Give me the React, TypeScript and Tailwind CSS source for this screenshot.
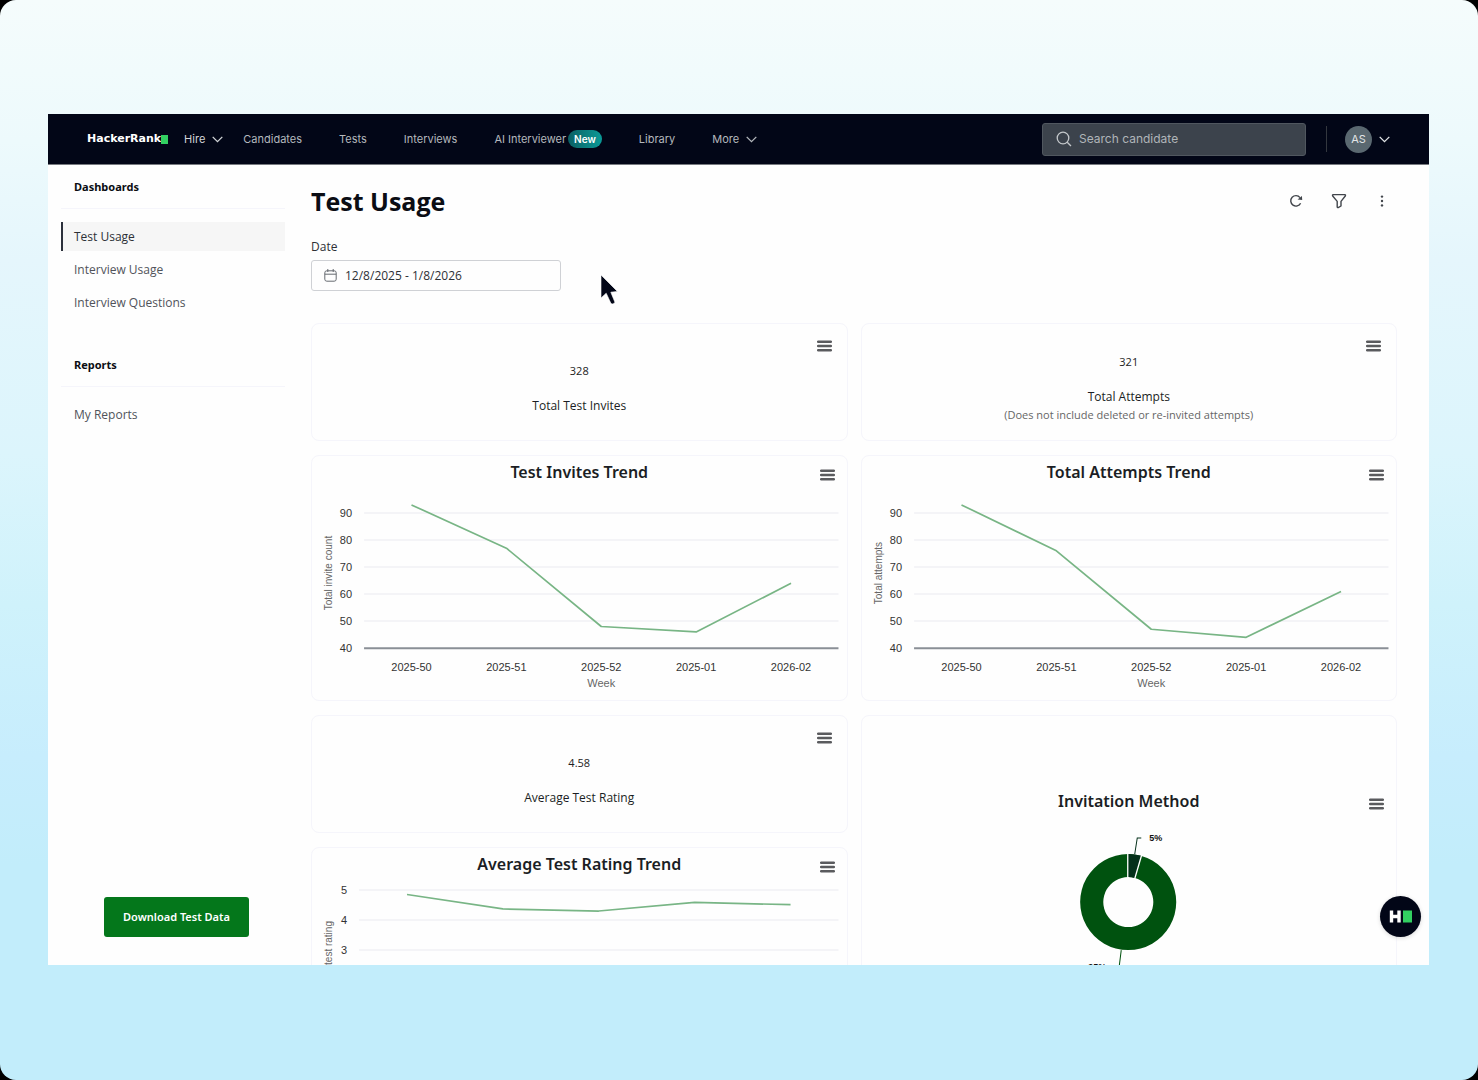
import React from 'react'

const navItems = ['Candidates', 'Tests', 'Interviews']

const dashboards = [
  { label: 'Test Usage', active: true },
  { label: 'Interview Usage', active: false },
  { label: 'Interview Questions', active: false },
]

const weeks = ['2025-50', '2025-51', '2025-52', '2025-01', '2026-02']

function Chevron() {
  return (
    <svg className="h-[7px] w-[11px]" viewBox="0 0 11 7" fill="none" stroke="currentColor" strokeWidth="1.3" aria-hidden="true">
      <path d="M0.7 0.9 L5.5 5.7 L10.3 0.9" />
    </svg>
  )
}

function MenuButton({ className, label }: { className: string; label: string }) {
  return (
    <button type="button" aria-label={`${label} menu`} className={`absolute text-[#5a5b5e] ${className}`}>
      <svg className="h-3 w-[15px]" viewBox="0 0 15 12" stroke="currentColor" strokeWidth="2.5" strokeLinecap="round" aria-hidden="true">
        <path d="M1.2 1.7H13.8M1.2 6H13.8M1.2 10.3H13.8" />
      </svg>
    </button>
  )
}

function StatCard({ value, label, note }: { value: string; label: string; note?: string }) {
  return (
    <section className="relative flex min-h-[118px] flex-col items-center justify-center rounded-lg border border-[#f5f5fb]">
      <MenuButton className="top-4 right-[15px]" label={label} />
      <p className="text-[11px] leading-[42px] text-[#222]">{value}</p>
      <p className="mt-[5px] text-xs leading-[18px] text-[#1b1e24]">{label}</p>
      {note && <p className="text-[11px] leading-[17px] text-[#666]">{note}</p>}
    </section>
  )
}

interface TrendProps {
  title: string
  axisTitle: string
  values: number[]
  ticks: number[]
  left: number
  top: number
  step: number
  axisAnchor: 'middle' | 'end'
  axisY: number
}

function TrendCard({ title, axisTitle, values, ticks, left, top, step, axisAnchor, axisY }: TrendProps) {
  const right = 526
  const slot = (right - left) / weeks.length
  const perUnit = step / (ticks[0] - ticks[1])
  const yOf = (v: number) => top + (ticks[0] - v) * perUnit
  const bottom = top + step * (ticks.length - 1)
  const points = values.map((v, i) => `${left + slot * (i + 0.5)},${yOf(v)}`).join(' ')

  return (
    <section className="relative shrink-0 rounded-lg border border-[#f5f5fb]">
      <h2 className="h-[33px] text-center font-['Noto_Sans',sans-serif] text-base leading-8 font-semibold text-[#1b1e24]">{title}</h2>
      <MenuButton className="top-[13px] right-3" label={title} />
      <svg className="block w-full font-['Liberation_Sans',sans-serif]" viewBox="0 0 534 211" role="img" aria-label={title}>
        {ticks.map((t) => (
          <g key={t}>
            <line
              x1={left}
              x2={right}
              y1={yOf(t)}
              y2={yOf(t)}
              stroke={yOf(t) === bottom ? '#8a8f96' : '#f1f1f5'}
              strokeWidth={yOf(t) === bottom ? 2 : 1.5}
            />
            <text x={left < 50 ? 35 : 40} y={yOf(t) + 4} fontSize="11" fill="#333" textAnchor="end">
              {t}
            </text>
          </g>
        ))}
        <text transform={`translate(20 ${axisY}) rotate(-90)`} fontSize="10" fill="#666" textAnchor={axisAnchor}>
          {axisTitle}
        </text>
        <polyline points={points} fill="none" stroke="#78b585" strokeWidth="1.7" strokeLinejoin="round" />
        {weeks.map((w, i) => (
          <text key={w} x={left + slot * (i + 0.5)} y={bottom + 23} fontSize="11" fill="#333" textAnchor="middle">
            {w}
          </text>
        ))}
        <text x={(left + right) / 2} y={bottom + 39} fontSize="11" fill="#666" textAnchor="middle">
          Week
        </text>
      </svg>
    </section>
  )
}

function InvitationCard() {
  return (
    <section className="relative rounded-lg border border-[#f5f5fb] pt-[69px]">
      <h2 className="text-center font-['Noto_Sans',sans-serif] text-base leading-8 font-semibold text-[#1b1e24]">Invitation Method</h2>
      <MenuButton className="top-[82px] right-3" label="Invitation Method" />
      <svg className="block w-full font-['Liberation_Sans',sans-serif]" viewBox="0 0 534 210" role="img" aria-label="Invitation Method">
        {/* ring: outer radius 48, inner radius 25 */}
        <path
          d="M266 37 A48 48 0 1 1 265.9 37 Z M266 60 A25 25 0 1 0 266.1 60 Z"
          fill="#00520f"
          fillRule="evenodd"
        />
        <path d="M266 37 A48 48 0 0 1 278.9 38.8 L272.7 60.9 A25 25 0 0 0 266 60 Z" fill="#04301a" />
        <path d="M265.5 36 V61 M279.4 38 L272.4 62" stroke="#fff" strokeWidth="1.3" />
        <path d="M272.5 37 L275 21 H279" fill="none" stroke="#04301a" strokeWidth="1" />
        <text x="287" y="24" fontSize="9" fontWeight="bold" fill="#111">5%</text>
        <path d="M259 133 L257 149 H251" fill="none" stroke="#00520f" strokeWidth="1" />
        <text x="226" y="153" fontSize="9" fontWeight="bold" fill="#111">95%</text>
      </svg>
    </section>
  )
}

function Header() {
  return (
    <header className="flex h-[51px] shrink-0 items-center border-b border-[#777a80] bg-[#020617] pr-[39px] pl-[39px] font-['Inter',sans-serif] text-[11px] text-[#b4b8bd]">
      <a href="#" className="flex items-center font-['DejaVu_Sans',sans-serif] font-bold text-white">
        HackerRank
        <span className="h-[9px] w-[7px] bg-[#32d061]" />
      </a>
      <button type="button" className="ml-4 flex items-center gap-[7px] text-[#d2d5d8]">
        Hire
        <Chevron />
      </button>
      <nav className="ml-5 flex items-center gap-[37px] whitespace-nowrap">
        {navItems.map((item) => (
          <a key={item} href="#">{item}</a>
        ))}
        <a href="#" className="flex items-center gap-0.5">
          AI Interviewer
          <span className="h-[18px] rounded-full bg-linear-to-r from-[#0a6064] to-[#0a9a97] px-1.5 text-[10px] leading-[18px] font-semibold text-white">
            New
          </span>
        </a>
        <a href="#">Library</a>
        <button type="button" className="flex items-center gap-[7px]">
          More
          <Chevron />
        </button>
      </nav>
      <label className="ml-auto flex h-[33px] w-[264px] items-center gap-[7px] rounded-[3px] border border-[#50575f] bg-[#3c434c] px-[13px] text-[#c4c8cb]">
        <svg className="h-4 w-4" viewBox="0 0 16 16" fill="none" stroke="currentColor" strokeWidth="1.3" aria-hidden="true">
          <circle cx="7" cy="7" r="5.8" />
          <path d="M11.2 11.2 L15 15" />
        </svg>
        <input
          type="search"
          aria-label="Search candidate"
          placeholder="Search candidate"
          className="min-w-0 flex-1 bg-transparent text-xs outline-none placeholder:text-[#b0b5b9]"
        />
      </label>
      <span className="ml-5 h-[26px] w-px bg-[#33373f]" />
      <button type="button" className="ml-[18px] flex items-center gap-[7px] text-[#e2e5e7]">
        <span className="flex size-[27px] items-center justify-center rounded-full bg-[#5a6870] text-[11px]">AS</span>
        <Chevron />
      </button>
    </header>
  )
}

function SideHeading({ children }: { children: React.ReactNode }) {
  return (
    <h2 className="mb-[13px] h-11 border-b border-[#f5f5fb] pl-[13px] font-['Noto_Sans',sans-serif] text-[11px] leading-[43px] font-bold text-[#0b0d12]">{children}</h2>
  )
}

function Sidebar() {
  return (
    <aside className="flex w-[263px] shrink-0 flex-col pr-[26px] pb-7 pl-[13px] text-xs">
      <SideHeading>Dashboards</SideHeading>
      <nav className="flex flex-col gap-1">
        {dashboards.map((d) => (
          <a
            key={d.label}
            href="#"
            className={`border-l-2 pl-[11px] leading-[29px] ${d.active ? 'border-[#2b303b] bg-[#f6f6f6] text-[#2d3036]' : 'border-transparent text-[#50535a]'}`}
          >
            {d.label}
          </a>
        ))}
      </nav>
      <div className="mt-[26px]">
        <SideHeading>Reports</SideHeading>
      </div>
      <a href="#" className="pl-[13px] leading-[29px] text-[#50535a]">My Reports</a>
      <button type="button" className="mt-auto ml-[43px] h-10 w-[145px] rounded-[3px] bg-[#04771b] font-['Noto_Sans',sans-serif] text-[11px] font-semibold text-white">
        Download Test Data
      </button>
    </aside>
  )
}

function Toolbar() {
  return (
    <div className="mr-[3px] flex gap-[19px] text-[#41454b]">
      <button type="button" aria-label="Refresh" className="flex size-6 items-center justify-center">
        <svg className="size-4" viewBox="0 0 16 16" fill="none" stroke="currentColor" strokeWidth="1.4">
          <path d="M12.6 10.2 A5.2 5.2 0 1 1 12 4.6" />
          <path d="M9.6 6.4 L14.2 7 L13.9 3 Z" fill="currentColor" stroke="none" />
        </svg>
      </button>
      <button type="button" aria-label="Filter" className="flex size-6 items-center justify-center">
        <svg className="size-4" viewBox="0 0 16 16" fill="none" stroke="currentColor" strokeWidth="1.4" strokeLinejoin="round">
          <path d="M2.2 1.6 H13.8 Q14.9 1.8 14.3 3 L10 8.4 V13 L7.2 14.6 Q6.2 14.8 6.2 13.8 V8.4 L1.7 3 Q1.1 1.8 2.2 1.6 Z" />
        </svg>
      </button>
      <button type="button" aria-label="More options" className="flex size-6 items-center justify-center">
        <svg className="size-4" viewBox="0 0 16 16" fill="currentColor">
          <circle cx="8" cy="3.6" r="1.2" />
          <circle cx="8" cy="8" r="1.2" />
          <circle cx="8" cy="12.4" r="1.2" />
        </svg>
      </button>
    </div>
  )
}

export default function App() {
  return (
    <div className="bg-black">
      <div className="flex h-screen flex-col rounded-2xl bg-[linear-gradient(180deg,#f5fcfc_0%,#edfafc_13%,#e5f6fc_24%,#dcf5fc_42%,#cff2fb_56%,#c7edfd_70%,#c2edfb_80%)] pt-[114px] pr-[49px] pb-[115px] pl-12 font-['Open_Sans','Noto_Sans',sans-serif]">
        <div className="relative flex min-h-0 flex-1 flex-col overflow-hidden bg-[#fefefe]">
          <Header />
          <div className="flex min-h-0 flex-1">
            <Sidebar />
            <main className="min-w-0 flex-1 overflow-y-auto pt-[18px] pr-8 [scrollbar-width:none]">
              <div className="flex items-center justify-between">
                <h1 className="text-[25px] leading-9 font-bold text-[#0b0d14]">Test Usage</h1>
                <Toolbar />
              </div>
              <label htmlFor="date" className="mt-5 block text-xs leading-4 text-[#2d3036]">Date</label>
              <div className="mt-[5px] flex h-[31px] w-[250px] items-center gap-2 rounded-[3px] border border-[#cfd1d5] px-3">
                <svg className="size-[13px] text-[#666a70]" viewBox="0 0 13 13" fill="none" stroke="currentColor" aria-hidden="true">
                  <rect x="0.8" y="1.8" width="11.4" height="10.4" rx="2" />
                  <path d="M0.8 5.2H12.2M3.8 0V3M9.2 0V3" />
                </svg>
                <input id="date" defaultValue="12/8/2025 - 1/8/2026" className="min-w-0 flex-1 text-xs text-[#2d3036] outline-none" />
              </div>
              <div className="mt-8 grid grid-cols-2 gap-[13px]">
                <div className="flex flex-col gap-[14px]">
                  <StatCard value="328" label="Total Test Invites" />
                  <TrendCard
                    title="Test Invites Trend"
                    axisTitle="Total invite count"
                    values={[93, 77, 48, 46, 64]}
                    ticks={[90, 80, 70, 60, 50, 40]}
                    left={52}
                    top={24}
                    step={27}
                    axisAnchor="middle"
                    axisY={84}
                  />
                  <StatCard value="4.58" label="Average Test Rating" />
                  <TrendCard
                    title="Average Test Rating Trend"
                    axisTitle="Average test rating"
                    values={[4.85, 4.37, 4.3, 4.59, 4.51]}
                    ticks={[5, 4, 3, 2, 1, 0]}
                    left={47}
                    top={9}
                    step={30}
                    axisAnchor="end"
                    axisY={40}
                  />
                </div>
                <div className="flex flex-col gap-[14px]">
                  <StatCard value="321" label="Total Attempts" note="(Does not include deleted or re-invited attempts)" />
                  <TrendCard
                    title="Total Attempts Trend"
                    axisTitle="Total attempts"
                    values={[93, 76, 47, 44, 61]}
                    ticks={[90, 80, 70, 60, 50, 40]}
                    left={52}
                    top={24}
                    step={27}
                    axisAnchor="middle"
                    axisY={84}
                  />
                  <InvitationCard />
                </div>
              </div>
            </main>
          </div>

          {/* Chat bubble */}
          <button
            type="button"
            aria-label="Help chat"
            className="absolute right-2 bottom-7 flex size-[41px] items-center justify-center rounded-full bg-[#020617] shadow-[0_1px_4px_rgba(0,0,0,0.15)]"
          >
            <svg className="h-[13px] w-6" viewBox="0 0 24 13" aria-hidden="true">
              <path d="M2.5 0.5V12.5M10 0.5V12.5M2 6.5H10" stroke="#fff" strokeWidth="3.4" />
              <rect x="14" y="0.5" width="9" height="12" fill="#32d061" />
            </svg>
          </button>

          {/* Mouse pointer */}
          <svg className="pointer-events-none absolute top-[160px] left-[552px] h-8 w-[18px]" viewBox="0 0 18 32" aria-hidden="true">
            <path d="M1 1 V24 L6.2 19.2 L11 29.6 Q12.5 30.8 15 28.4 L10.8 18.2 L17.4 17.4 Z" fill="#020617" stroke="#fff" strokeWidth="0.6" />
          </svg>
        </div>
      </div>
    </div>
  )
}
